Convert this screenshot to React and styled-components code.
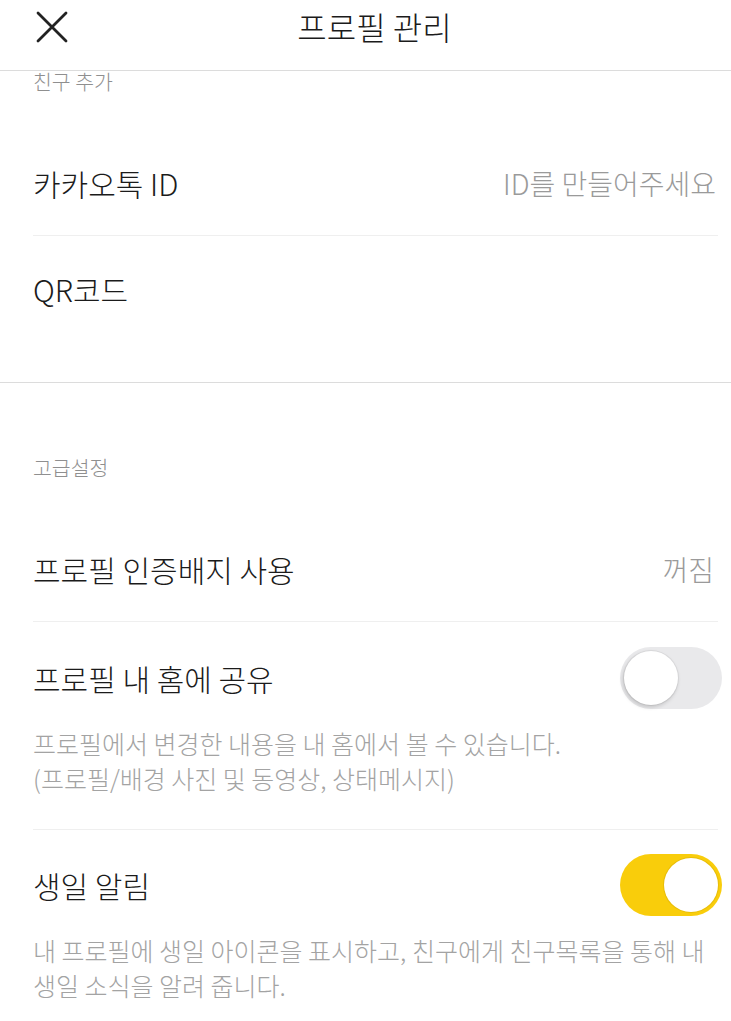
import React from 'react'
import styled, { createGlobalStyle } from 'styled-components'

const GlobalStyle = createGlobalStyle`
  html, body {
    margin: 0;
    padding: 0;
    background: #fff;
  }
  body {
    font-family: "Noto Sans CJK KR", "Noto Sans", sans-serif;
    color: #1b1b1b;
    -webkit-font-smoothing: antialiased;
  }
  * {
    box-sizing: border-box;
  }
`

const Page = styled.div`
  width: 731px;
  height: 1021px;
  overflow: hidden;
  background: #fff;
`

const HeaderBar = styled.header`
  height: 71px;
  display: grid;
  grid-template-columns: 104px 1fr 104px;
  align-items: start;
  border-bottom: 1px solid #dcdcdc;
`

const CloseBtn = styled.button`
  margin: 11px 0 0 36px;
  padding: 0;
  width: 32px;
  height: 32px;
  border: 0;
  background: none;
  display: flex;
  color: #222;
`

const Title = styled.h1`
  margin: 0;
  padding: 6px 0 0 18px;
  text-align: center;
  font-size: 32px;
  line-height: 40px;
  font-weight: 300;
  color: #1b1b1b;
`

const Section = styled.section`
  padding-bottom: ${p => p.$bottom || 0}px;
  border-bottom: ${p => (p.$line ? '1px solid #dcdcdc' : 'none')};
`

const SectionTitle = styled.div`
  padding: ${p => p.$top || 0}px 0 39px 33px;
  font-size: 20.5px;
  line-height: 20px;
  font-weight: 300;
  color: #8f8f8f;
`

const List = styled.div`
  margin: 0 13px 0 33px;
`

const Row = styled.div`
  height: ${p => (p.$last ? 105 : 106)}px;
  display: flex;
  align-items: center;
  justify-content: space-between;
  border-bottom: ${p => (p.$last ? 'none' : '1px solid #efefef')};
`

const Label = styled.span`
  font-size: 30px;
  line-height: 56px;
  font-weight: 300;
  color: #1b1b1b;
`

const Value = styled.span`
  font-size: 28px;
  line-height: 56px;
  font-weight: 300;
  color: #9a9a9a;
  margin-right: ${p => p.$mr || 0}px;
`

const ToggleItem = styled.div`
  padding: ${p => p.$top}px 0 ${p => p.$bottom}px;
  border-bottom: ${p => (p.$last ? 'none' : '1px solid #efefef')};
`

const ToggleHead = styled.div`
  display: flex;
  align-items: center;
  justify-content: space-between;
`

const Desc = styled.p`
  margin: 17px 0 0;
  font-size: 25px;
  line-height: 35px;
  font-weight: 300;
  color: #a3a3a3;
  white-space: nowrap;
`

const Track = styled.div`
  position: relative;
  width: 102px;
  height: 62px;
  margin-right: -4px;
  border-radius: 31px;
  background: ${p => (p.$on ? '#f9cd0b' : '#e9e9eb')};
`

const Knob = styled.div`
  position: absolute;
  top: 4px;
  left: ${p => (p.$on ? '44px' : '4px')};
  width: 54px;
  height: 54px;
  border-radius: 50%;
  background: #fff;
  box-shadow: ${p =>
    p.$on
      ? '0 0 0 1px rgba(200, 160, 0, 0.35)'
      : '-1px 2px 4px rgba(0, 0, 0, 0.18), 0 0 0 1px rgba(0, 0, 0, 0.05)'};
`

function Toggle ({ on }) {
  return (
    <Track $on={on}>
      <Knob $on={on} />
    </Track>
  )
}

function CloseIcon () {
  return (
    <svg width='32' height='32' viewBox='0 0 32 32' fill='none'>
      <path d='M2 2 L30 30 M30 2 L2 30' stroke='currentColor' strokeWidth='2.8' strokeLinecap='round' />
    </svg>
  )
}

export default function App () {
  return (
    <Page>
      <GlobalStyle />
      <HeaderBar>
        <CloseBtn aria-label='닫기'>
          <CloseIcon />
        </CloseBtn>
        <Title>프로필 관리</Title>
        <div />
      </HeaderBar>

      <Section $line $bottom={41}>
        <SectionTitle $top={0}>친구 추가</SectionTitle>
        <List>
          <Row>
            <Label>카카오톡 ID</Label>
            <Value $mr={2}>ID를 만들어주세요</Value>
          </Row>
          <Row $last>
            <Label>QR코드</Label>
          </Row>
        </List>
      </Section>

      <Section>
        <SectionTitle $top={74}>고급설정</SectionTitle>
        <List>
          <Row>
            <Label>프로필 인증배지 사용</Label>
            <Value $mr={4}>꺼짐</Value>
          </Row>
          <ToggleItem $top={25} $bottom={33}>
            <ToggleHead>
              <Label>프로필 내 홈에 공유</Label>
              <Toggle on={false} />
            </ToggleHead>
            <Desc>
              프로필에서 변경한 내용을 내 홈에서 볼 수 있습니다.
              <br />
              (프로필/배경 사진 및 동영상, 상태메시지)
            </Desc>
          </ToggleItem>
          <ToggleItem $top={24} $bottom={20} $last>
            <ToggleHead>
              <Label>생일 알림</Label>
              <Toggle on />
            </ToggleHead>
            <Desc>
              내 프로필에 생일 아이콘을 표시하고, 친구에게 친구목록을 통해 내
              <br />
              생일 소식을 알려 줍니다.
            </Desc>
          </ToggleItem>
        </List>
      </Section>
    </Page>
  )
}
